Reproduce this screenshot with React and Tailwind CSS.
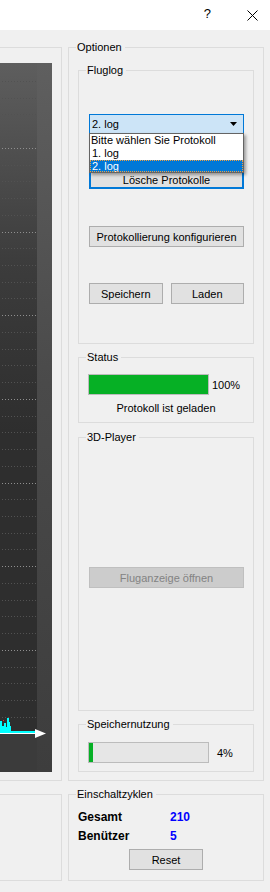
import React from "react";

const GroupBox = ({ label, className, children }) => {
  return (
    <div className={`relative border border-[#dcdcdc] ${className}`}>
      <span className="absolute -top-[9px] left-[7px] bg-[#f0f0f0] pl-px pr-[3px] leading-[16px]">
        {label}
      </span>
      {children}
    </div>
  );
};

const WinButton = ({ children, className }) => {
  return (
    <div className={`flex items-center justify-center h-[21px] border border-[#adadad] bg-[#e1e1e1] ${className}`}>
      {children}
    </div>
  );
};

const Chart = () => {
  const lines = [];
  for (let k = 0; k < 39; k++) {
    const y = Math.round(18 + 16.73 * k) + 0.5;
    const major = k % 5 === 4;
    lines.push(
      <line
        key={k}
        x1="2"
        x2="37"
        y1={y}
        y2={y}
        stroke={major ? "#8f8f8f" : "#525252"}
        strokeWidth="1"
        strokeDasharray="1 2"
      />
    );
  }
  return (
    <svg width="52" height="709" viewBox="0 0 52 709" className="block">
      <defs>
        <linearGradient id="strip" x1="0" y1="0" x2="0" y2="1">
          <stop offset="0" stopColor="#5f5f5f" />
          <stop offset="0.45" stopColor="#4a4a4a" />
          <stop offset="1" stopColor="#3d3d3d" />
        </linearGradient>
        <linearGradient id="plot" x1="0" y1="0" x2="0" y2="1">
          <stop offset="0" stopColor="#5e5e5e" />
          <stop offset="0.3" stopColor="#3c3c3c" />
          <stop offset="0.55" stopColor="#2e2e2e" />
          <stop offset="1" stopColor="#2e2e2e" />
        </linearGradient>
      </defs>
      <rect x="0" y="0" width="52" height="709" fill="url(#strip)" />
      <rect x="0" y="0" width="37" height="670" fill="url(#plot)" />
      <rect x="0" y="670" width="37" height="39" fill="#3b3b3b" />
      {lines}
      <polygon
        points="0,670 0,658 2,658 2,663 4,663 4,660 6,660 6,664 7,664 7,655 9,655 9,659 10,659 10,663 11,663 11,668 36,668 36,670"
        fill="#00ffff"
      />
      <rect x="3" y="657" width="1" height="1" fill="#ff2020" />
      <line x1="0" x2="37" y1="670.5" y2="670.5" stroke="#ffffff" strokeWidth="1" />
      <polygon points="35,666 46,670.5 35,675" fill="#ffffff" />
    </svg>
  );
};

const App = () => {
  return (
    <div className="w-[270px] h-[892px] overflow-hidden bg-[#f0f0f0] text-black text-[11px] leading-[16px] font-['Liberation_Sans',Arial,sans-serif]">
      {/* title bar */}
      <div className="h-[30px] bg-white flex items-center justify-end">
        <span className="text-[13px] mr-[36px] mt-[-2px]">?</span>
        <svg width="11" height="11" viewBox="0 0 11 11" className="mr-[12px]">
          <path d="M0.5 0.5 L10.5 10.5 M10.5 0.5 L0.5 10.5" stroke="#000" strokeWidth="1" />
        </svg>
      </div>

      <div className="grid grid-cols-[62px_196px] grid-rows-[734px_87px] gap-x-[6px] gap-y-[13px] pt-[17px]">
        {/* chart box */}
        <div className="border-t border-r border-b border-[#dcdcdc] pt-[15px]">
          <Chart />
        </div>

        {/* Optionen */}
        <GroupBox label="Optionen" className="pt-[22px] px-[9px] flex flex-col">
          <GroupBox label="Fluglog" className="h-[274px] pl-[10px] pr-[9px] flex flex-col">
            <div className="relative mt-[43px]">
              <div className="h-[20px] border border-[#0078d7] bg-[#cce4f7] flex items-center justify-between pl-[2px] pr-[6px]">
                <span>2. log</span>
                <svg width="7" height="4" viewBox="0 0 7 4">
                  <polygon points="0,0 7,0 3.5,4" fill="#000" />
                </svg>
              </div>
              <div className="absolute z-10 left-0 top-[19px] w-[155px] bg-white border border-[#646464] shadow-[2px_2px_3px_rgba(0,0,0,0.35)] leading-[13px]">
                <div className="h-[13px] pl-[1px]">Bitte wählen Sie Protokoll</div>
                <div className="h-[13px] pl-[2px]">1. log</div>
                <div className="h-[12px] pl-[2px] bg-[#0078d7] text-white outline-1 outline-dotted outline-[#f0a040] -outline-offset-1">
                  2. log
                </div>
              </div>
            </div>
            <div className="mt-[34px] h-[21px] border-2 border-[#0078d7] bg-[#e1e1e1] flex items-center justify-center pt-[3px]">
              Lösche Protokolle
            </div>
            <WinButton className="mt-[37px]">Protokollierung konfigurieren</WinButton>
            <div className="mt-[36px] grid grid-cols-2 gap-[8px]">
              <WinButton>Speichern</WinButton>
              <WinButton>Laden</WinButton>
            </div>
          </GroupBox>

          <GroupBox label="Status" className="mt-[13px] h-[66px] pl-[9px] flex flex-col">
            <div className="mt-[16px] flex items-center">
              <div className="w-[121px] h-[21px] border border-[#bcbcbc] bg-[#06b025]" />
              <span className="ml-[3px]">100%</span>
            </div>
            <div className="mt-[5px] pr-[9px] text-center">Protokoll ist geladen</div>
          </GroupBox>

          <GroupBox label="3D-Player" className="mt-[14px] h-[274px] pl-[10px] pr-[9px] flex flex-col">
            <div className="mt-[129px] h-[21px] border border-[#bfbfbf] bg-[#cccccc] text-[#838383] flex items-center justify-center">
              Fluganzeige öffnen
            </div>
          </GroupBox>

          <GroupBox label="Speichernutzung" className="mt-[13px] h-[48px] pl-[9px] flex flex-col">
            <div className="mt-[17px] flex items-center">
              <div className="w-[121px] h-[21px] border border-[#bcbcbc] bg-[#e6e6e6] flex">
                <div className="w-[4px] h-full bg-[#06b025]" />
              </div>
              <span className="ml-[8px]">4%</span>
            </div>
          </GroupBox>
        </GroupBox>

        {/* bottom left box */}
        <div className="border-t border-r border-b border-[#dcdcdc]" />

        {/* Einschaltzyklen */}
        <GroupBox label="Einschaltzyklen" className="pl-[9px] pt-[14px] flex flex-col">
          <div className="grid grid-cols-[92px_1fr] gap-y-[3px] font-bold text-[12px]">
            <span>Gesamt</span>
            <span className="text-[#0000ff]">210</span>
            <span>Benützer</span>
            <span className="text-[#0000ff]">5</span>
          </div>
          <div className="mt-[5px] flex justify-center pr-[9px]">
            <WinButton className="w-[74px]">Reset</WinButton>
          </div>
        </GroupBox>
      </div>
    </div>
  );
};

export default App;
